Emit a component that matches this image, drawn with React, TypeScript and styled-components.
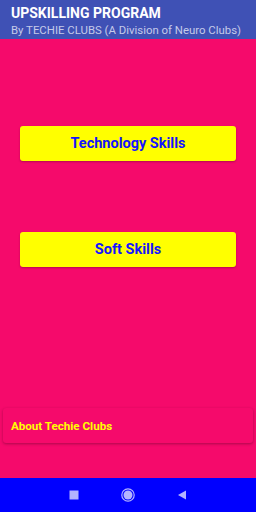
import styled, { createGlobalStyle } from "styled-components";

const Global = createGlobalStyle`
  html, body {
    margin: 0;
    padding: 0;
    background: #f50a6b;
  }
  * {
    box-sizing: border-box;
  }
`;

const Screen = styled.div`
  width: 256px;
  height: 512px;
  display: flex;
  flex-direction: column;
  background: #f50a6b;
  font-family: Roboto, "Liberation Sans", sans-serif;
`;

const AppBar = styled.header`
  height: 39px;
  background: #3f51b5;
  padding: 5px 0 0 11px;
  display: flex;
  flex-direction: column;
`;

const Title = styled.div`
  color: #ffffff;
  font-size: 14px;
  font-weight: 700;
  line-height: 17px;
`;

const Subtitle = styled.div`
  color: #c5cae9;
  font-size: 11.4px;
  line-height: 14px;
  margin-top: 1px;
`;

const Content = styled.main`
  flex: 1;
  display: flex;
  flex-direction: column;
  padding: 87px 20px 0;
  gap: 71px;
`;

const SkillButton = styled.button`
  height: 35px;
  width: 100%;
  border: none;
  border-radius: 3px;
  background: #ffff00;
  color: #1414ff;
  font-family: Roboto, "Liberation Sans", sans-serif;
  font-size: 14.5px;
  font-weight: 700;
  box-shadow: 0 1px 2px rgba(0, 0, 0, 0.25);
  cursor: pointer;
`;

const AboutCard = styled.div`
  margin: 0 3px 35px;
  height: 35px;
  border-radius: 3px;
  background: #f50a6b;
  box-shadow: 0 1px 3px rgba(0, 0, 0, 0.3);
  display: flex;
  align-items: center;
  padding-left: 8px;
  color: #ffff00;
  font-size: 11.6px;
  font-weight: 700;
`;

const NavBar = styled.nav`
  height: 34px;
  background: #0000ff;
  display: flex;
  align-items: center;
  justify-content: center;
  gap: 38px;
`;

const NavIcon = styled.svg`
  width: 16px;
  height: 16px;
`;

export default function App() {
  return (
    <Screen>
      <Global />
      <AppBar>
        <Title>UPSKILLING PROGRAM</Title>
        <Subtitle>By TECHIE CLUBS (A Division of Neuro Clubs)</Subtitle>
      </AppBar>
      <Content>
        <SkillButton>Technology Skills</SkillButton>
        <SkillButton>Soft Skills</SkillButton>
      </Content>
      <AboutCard>About Techie Clubs</AboutCard>
      <NavBar>
        <NavIcon viewBox="0 0 16 16">
          <rect x="3.5" y="3.5" width="9" height="9" fill="#b3b3ff" />
        </NavIcon>
        <NavIcon viewBox="0 0 16 16">
          <circle cx="8" cy="8" r="6.2" fill="none" stroke="#b3b3ff" strokeWidth="1.2" />
          <circle cx="8" cy="8" r="4.5" fill="#b3b3ff" />
        </NavIcon>
        <NavIcon viewBox="0 0 16 16">
          <path d="M12 3.5 L4 8 L12 12.5 Z" fill="#b3b3ff" />
        </NavIcon>
      </NavBar>
    </Screen>
  );
}
